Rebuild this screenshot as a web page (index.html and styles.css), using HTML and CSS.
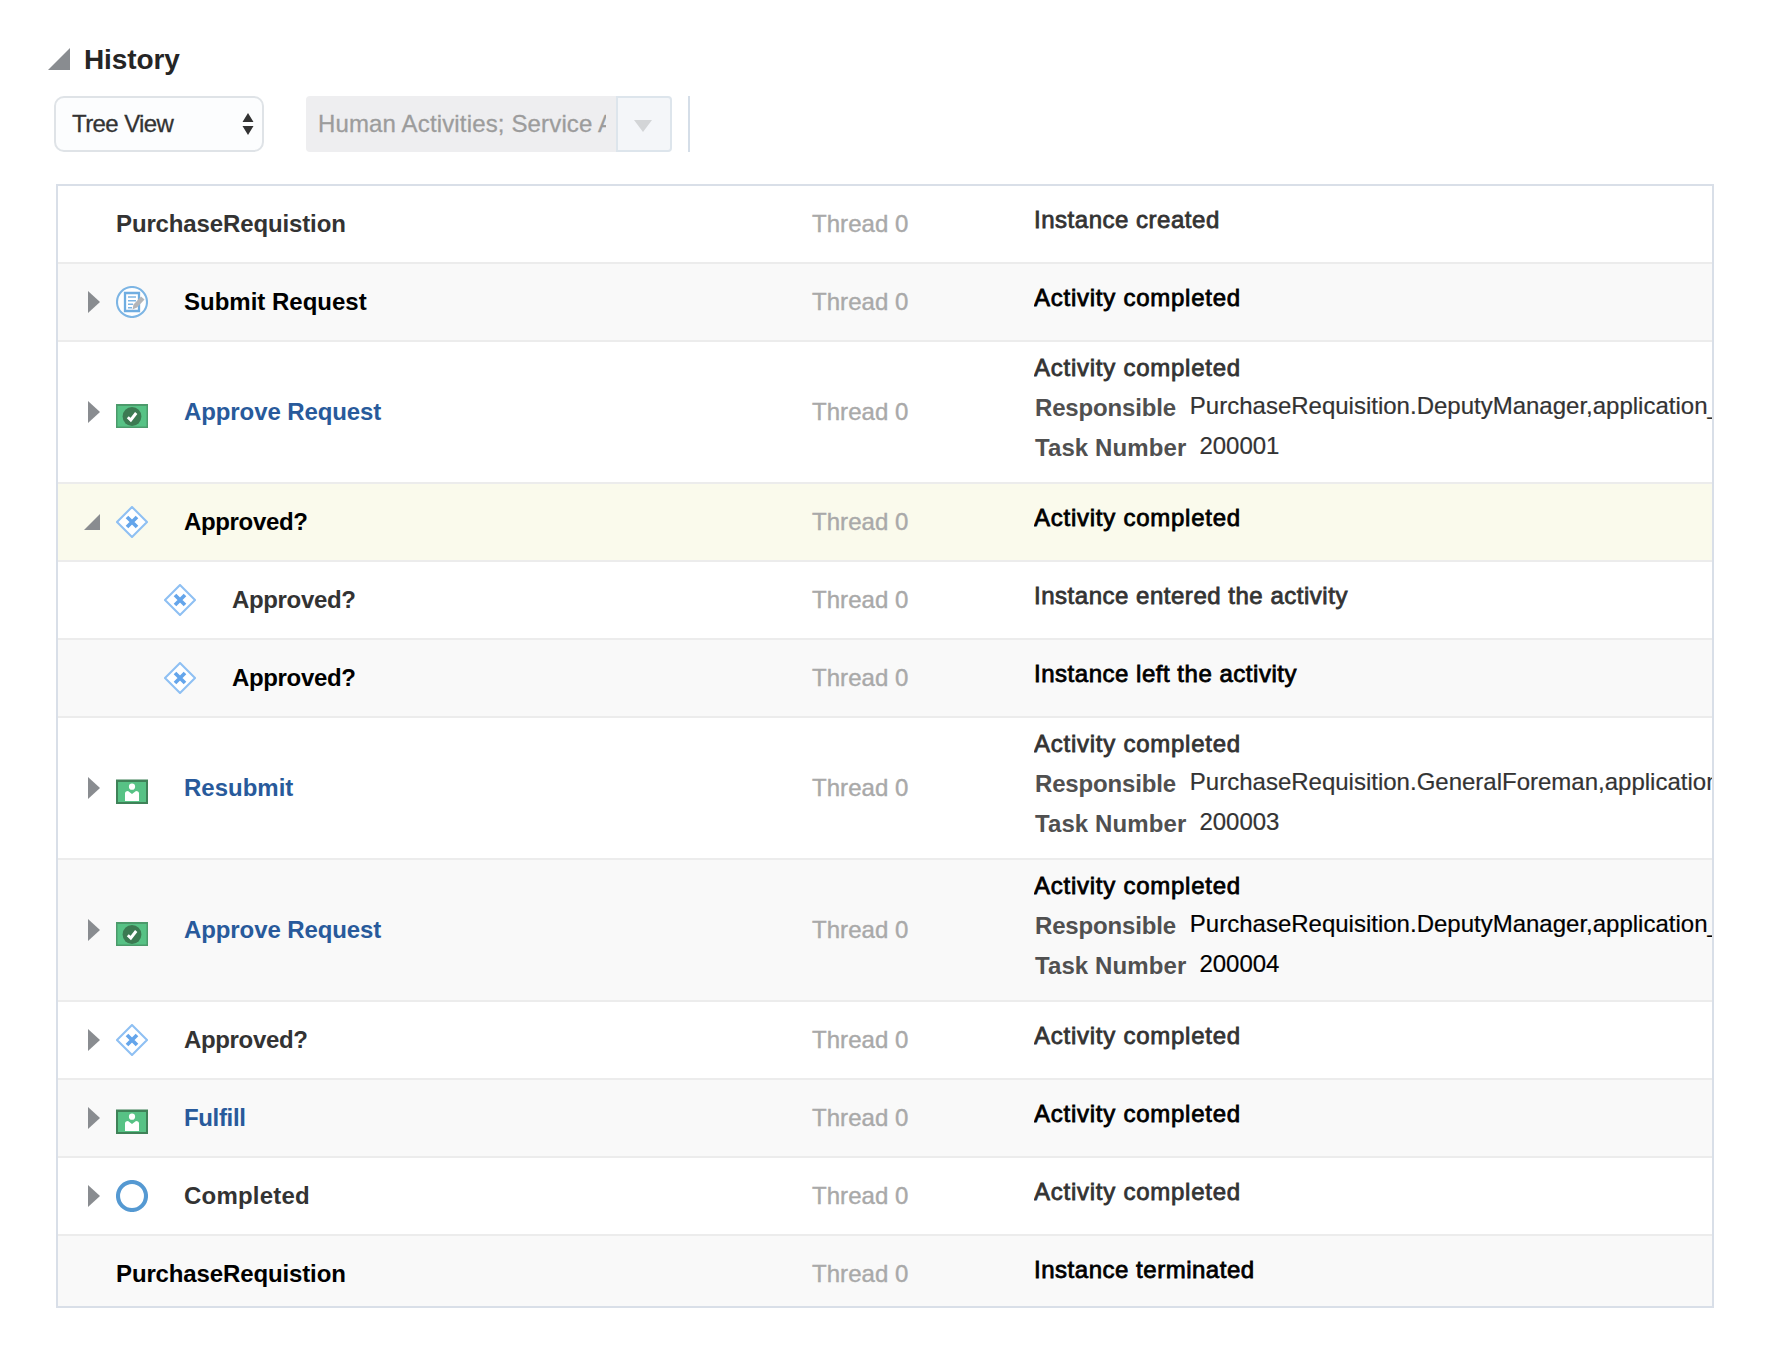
FILE: index.html
```
<!DOCTYPE html>
<html lang="en">
<head>
<meta charset="utf-8">
<title>History</title>
<link rel="stylesheet" href="styles.css">
</head>
<body>
<svg class="defs" width="0" height="0" aria-hidden="true">
  <symbol id="right" viewBox="0 0 16 24"><path d="M4 1 16 12 4 23Z" fill="#898c90"/></symbol>
  <symbol id="down" viewBox="0 0 16 24"><path d="M16 4V20H0Z" fill="#898c90"/></symbol>
  <symbol id="form" viewBox="0 0 32 32">
    <circle cx="16" cy="16" r="15" fill="#fff" stroke="#7db5e4" stroke-width="2.1"/>
    <path d="M9 7H23V25H9Z" fill="#fff" stroke="#6fade1" stroke-width="2.3"/>
    <path d="M12 11H20M12 14.7H20M12 18.3H17M12 21.8H16" stroke="#7db5e4" stroke-width="1.6"/>
    <path d="M16.5 23.5 17.5 18.5 25 10.5 28.5 13.5 21 21.5Z" fill="#b3b5b8"/>
  </symbol>
  <symbol id="approve" viewBox="0 0 32 32">
    <rect y="8" width="32" height="24" fill="#4c9a6b"/>
    <rect x="1.5" y="10" width="29" height="20.5" fill="#57c285"/>
    <circle cx="16" cy="20.5" r="9.4" fill="#3c7a52"/>
    <path d="M11.8 21.2 14.8 24 20.2 17" fill="none" stroke="#fff" stroke-width="2.9"/>
  </symbol>
  <symbol id="person" viewBox="0 0 32 32">
    <rect y="7.5" width="32" height="24.5" fill="#3f8258"/>
    <rect x="2" y="10" width="28" height="20" fill="#57c285"/>
    <circle cx="16" cy="14.7" r="3.1" fill="#fff"/>
    <path d="M9 29V21.5Q9 19 12 19L16 22 20 19Q23 19 23 21.5V29Z" fill="#fff"/>
  </symbol>
  <symbol id="gateway" viewBox="0 0 32 32">
    <path d="M16 1 31 16 16 31 1 16Z" fill="#fff" stroke="#8fc0f3" stroke-width="2.1" stroke-linejoin="round"/>
    <path d="M11 11 21 21M21 11 11 21" stroke="#64a5eb" stroke-width="3.7"/>
  </symbol>
  <symbol id="end" viewBox="0 0 32 32"><circle cx="16" cy="16" r="14" fill="#fff" stroke="#5599d2" stroke-width="4.1"/></symbol>
</svg>

<main class="page">
  <h1 class="title"><svg class="title-arrow" viewBox="0 0 22 22"><path d="M22 0V22H0Z" fill="#898c90"/></svg><span>History</span></h1>
  <div class="toolbar">
    <div class="select"><span>Tree View</span><svg width="12" height="24" viewBox="0 0 12 24"><path d="M6 1 11.5 10H.5ZM.5 14H11.5L6 23Z" fill="#333"/></svg></div>
    <div class="filter"><div class="filter-box"><div class="filter-text">Human Activities; Service Activities</div></div><div class="filter-button"><svg width="18" height="12" viewBox="0 0 18 12"><path d="M0 0H18L9 12Z" fill="#d3d5d7"/></svg></div></div>
    <div class="divider"></div>
  </div>

  <section class="table">
    <div class="row"><div class="name root"><b>PurchaseRequistion</b></div><div class="thread">Thread 0</div><div class="status"><p class="event instance">Instance created</p></div></div>
    <div class="row alt"><div class="name"><svg class="arrow"><use href="#right"/></svg><svg class="icon"><use href="#form"/></svg><b>Submit Request</b></div><div class="thread">Thread 0</div><div class="status"><p class="event">Activity completed</p></div></div>
    <div class="row tall"><div class="name"><svg class="arrow"><use href="#right"/></svg><svg class="icon"><use href="#approve"/></svg><b class="link approve">Approve Request</b></div><div class="thread">Thread 0</div><div class="status"><p class="event">Activity completed</p><p class="detail"><b class="responsible">Responsible</b><span>PurchaseRequisition.DeputyManager,application_role</span></p><p class="detail"><b class="task">Task Number</b><span>200001</span></p></div></div>
    <div class="row selected"><div class="name"><svg class="arrow"><use href="#down"/></svg><svg class="icon"><use href="#gateway"/></svg><b class="gate">Approved?</b></div><div class="thread">Thread 0</div><div class="status"><p class="event">Activity completed</p></div></div>
    <div class="row"><div class="name child"><svg class="icon"><use href="#gateway"/></svg><b class="gate">Approved?</b></div><div class="thread">Thread 0</div><div class="status"><p class="event instance">Instance entered the activity</p></div></div>
    <div class="row alt"><div class="name child"><svg class="icon"><use href="#gateway"/></svg><b class="gate">Approved?</b></div><div class="thread">Thread 0</div><div class="status"><p class="event instance">Instance left the activity</p></div></div>
    <div class="row tall"><div class="name"><svg class="arrow"><use href="#right"/></svg><svg class="icon"><use href="#person"/></svg><b class="link">Resubmit</b></div><div class="thread">Thread 0</div><div class="status"><p class="event">Activity completed</p><p class="detail"><b class="responsible">Responsible</b><span>PurchaseRequisition.GeneralForeman,application_role</span></p><p class="detail"><b class="task">Task Number</b><span>200003</span></p></div></div>
    <div class="row tall alt"><div class="name"><svg class="arrow"><use href="#right"/></svg><svg class="icon"><use href="#approve"/></svg><b class="link approve">Approve Request</b></div><div class="thread">Thread 0</div><div class="status"><p class="event">Activity completed</p><p class="detail"><b class="responsible">Responsible</b><span>PurchaseRequisition.DeputyManager,application_role</span></p><p class="detail"><b class="task">Task Number</b><span>200004</span></p></div></div>
    <div class="row"><div class="name"><svg class="arrow"><use href="#right"/></svg><svg class="icon"><use href="#gateway"/></svg><b class="gate">Approved?</b></div><div class="thread">Thread 0</div><div class="status"><p class="event">Activity completed</p></div></div>
    <div class="row alt"><div class="name"><svg class="arrow"><use href="#right"/></svg><svg class="icon"><use href="#person"/></svg><b class="link fulfill">Fulfill</b></div><div class="thread">Thread 0</div><div class="status"><p class="event">Activity completed</p></div></div>
    <div class="row"><div class="name"><svg class="arrow"><use href="#right"/></svg><svg class="icon"><use href="#end"/></svg><b class="completed">Completed</b></div><div class="thread">Thread 0</div><div class="status"><p class="event">Activity completed</p></div></div>
    <div class="row alt"><div class="name root"><b>PurchaseRequistion</b></div><div class="thread">Thread 0</div><div class="status"><p class="event instance">Instance terminated</p></div></div>
  </section>
</main>
</body>
</html>
```
FILE: styles.css
```
* { box-sizing: border-box; }
body {
  margin: 0;
  background: #fff;
  color: #333;
  font: 24px/40px "Liberation Sans", Arial, sans-serif;
  white-space: nowrap;
}
.defs { display: block; height: 0; }
.page { padding: 40px 62px 0 48px; }

.title {
  display: flex;
  align-items: center;
  gap: 14px;
  height: 40px;
  margin: 0;
  color: #252525;
  font-size: 28px;
  letter-spacing: -0.1px;
}
.title-arrow { width: 22px; height: 22px; margin-top: -2px; }

.toolbar { display: flex; height: 56px; margin: 16px 0 32px 6px; }
.select {
  display: flex;
  align-items: center;
  justify-content: space-between;
  width: 210px;
  padding: 0 8px 0 16px;
  background: #fcfdfe;
  border: 2px solid #dfe3e7;
  border-radius: 10px;
  letter-spacing: -0.6px;
  -webkit-text-stroke: 0.3px;
}
.filter { display: flex; width: 366px; margin-left: 42px; }
.filter-box {
  width: 310px;
  padding: 8px 10px 8px 12px;
  background: #eeeef0;
  border-radius: 4px 0 0 4px;
}
.filter-text { overflow: hidden; color: #9c9c9c; letter-spacing: 0.15px; -webkit-text-stroke: 0.3px; }
.filter-button {
  display: flex;
  align-items: center;
  justify-content: center;
  width: 56px;
  padding: 4px 2px 0 0;
  background: #f4f6f9;
  border: 2px solid #dde5ec;
  border-radius: 0 4px 4px 0;
}
.divider { width: 2px; margin-left: 16px; background: #d5dee8; }

.table {
  width: 1658px;
  height: 1124px;
  margin-left: 8px;
  border: 2px solid #d9dfe8;
  overflow: hidden;
}
.row {
  display: grid;
  grid-template-columns: 754px 222px 1fr;
  align-items: center;
  height: 78px;
  border-bottom: 2px solid #ececec;
}
.row.tall { height: 142px; }
.alt, .selected { color: #000; }
.alt { background: #f9f9f9; }
.selected { background: #fafaec; }

.name { display: flex; align-items: center; padding-left: 26px; }
.name.child { padding-left: 106px; }
.name.root { padding-left: 58px; letter-spacing: -0.13px; }
.arrow { width: 16px; height: 24px; margin-right: 16px; margin-top: -1px; }
.icon { width: 32px; height: 32px; margin-right: 36px; }
.link { color: #285a9b; }
.approve { letter-spacing: -0.1px; }
.gate { letter-spacing: -0.35px; }
.fulfill { letter-spacing: -0.35px; }
.completed { letter-spacing: 0.2px; }
.thread { color: #a9a9a9; letter-spacing: 0.05px; -webkit-text-stroke: 0.4px; }
.status { overflow: hidden; align-self: start; padding-top: 14px; }
.tall .status { padding-top: 6px; }
.status p { margin: 0; }
.event { letter-spacing: 0.75px; -webkit-text-stroke: 0.8px; }
.instance { letter-spacing: 0.52px; }
.detail { display: flex; height: 40px; }
.detail span { margin-top: -2px; -webkit-text-stroke: 0.2px; }
.detail b { color: #505050; }
.responsible { margin-left: 1px; margin-right: 14px; letter-spacing: -0.17px; }
.task { margin-left: 1px; margin-right: 13px; letter-spacing: 0.1px; }
```
